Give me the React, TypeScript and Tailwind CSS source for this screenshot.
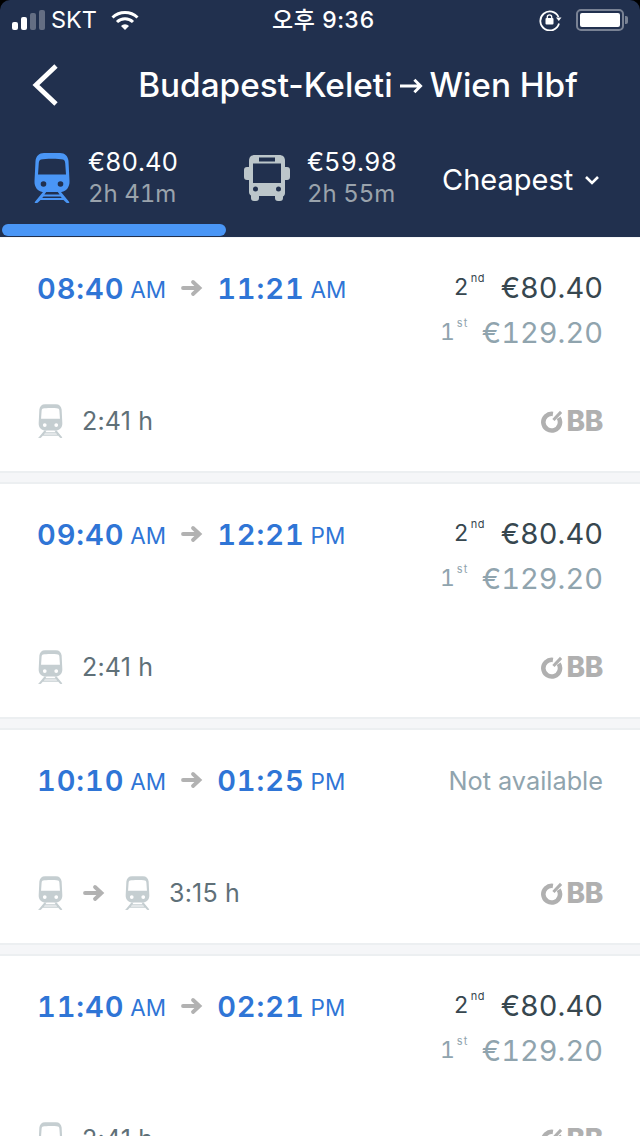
import React from 'react';

const font = { fontFamily: 'Inter, "Noto Sans CJK KR", sans-serif' };

function TrainIcon({ className }: { className?: string }) {
  return (
    <svg viewBox="0 0 40 50" className={className} fill="currentColor">
      <path
        fillRule="evenodd"
        d="M12 0h16c5 0 8 3 8.500 8l1 20c.3 6-3 10-8 11H10.500c-5-1-8.300-5-8-11l1-20C4 3 7 0 12 0zM9 6.500C7.500 7 7 8 6.800 10L6 21.500h28L33.200 10c-.2-2-.7-3-2.200-3.500C27 5.500 13 5.500 9 6.500z"
      />
      <circle cx="11.500" cy="31" r="2.800" fill="var(--hole)" />
      <circle cx="28.500" cy="31" r="2.800" fill="var(--hole)" />
      <path d="M11 39h3.200l-1.800 2.600h15.200L25.800 39H29l8 9.700c.6.800.3 1.300-.7 1.300h-1.200c-.6 0-1-.2-1.300-.7L31.500 47h-23l-2.300 2.300c-.3.500-.7.700-1.300.7H3.700c-1 0-1.300-.5-.7-1.300L11 39zM11.500 43.500l-1.300 1.500h19.600l-1.300-1.500z" />
    </svg>
  );
}

function BusIcon({ className }: { className?: string }) {
  return (
    <svg viewBox="0 0 46 46" className={className} fill="currentColor">
      <path
        fillRule="evenodd"
        d="M11 0h24c4 0 6 2 6 6v6h2c2 0 3 1 3 3v7c0 2-1 3-3 3h-2v13c0 2-1 3-2 3.500V43c0 2-1 3-3 3h-2c-2 0-3-1-3-3v-2H15v2c0 2-1 3-3 3h-2c-2 0-3-1-3-3v-2.500C6 40 5 39 5 37V25H3c-2 0-3-1-3-3v-7c0-2 1-3 3-3h2V6c0-4 2-6 6-6zM15 2.500v4h16v-4zM9 8.500V28h28V8.500zM11.500 31.500a2.500 2.500 0 1 0 0 5 2.500 2.500 0 0 0 0-5zm23 0a2.500 2.500 0 1 0 0 5 2.500 2.500 0 0 0 0-5z"
      />
    </svg>
  );
}

function SmallArrow() {
  return (
    <svg viewBox="0 0 22 18" className="h-[18px] w-[22px] text-[#b2b2b2]" fill="none" stroke="currentColor" strokeWidth="3.800" strokeLinecap="round">
      <path d="M2 9h16M12 3l6.500 6-6.500 6" />
    </svg>
  );
}

function ObbLogo() {
  return (
    <div className="flex items-center text-[#b0b0b0]">
      <svg viewBox="0 0 24 24" className="h-[23px] w-[23px]" fill="none" stroke="currentColor">
        <path strokeWidth="4.800" d="M13.500 4.100A8.700 8.700 0 1 0 19.500 8" />
        <path strokeWidth="3.200" d="M14 10.500L22 2" />
      </svg>
      <span className="ml-[3px] text-[28px] leading-none font-extrabold tracking-[-0.3px]">BB</span>
    </div>
  );
}

type Trip = {
  dep: string;
  depM: string;
  arr: string;
  arrM: string;
  duration: string;
  available: boolean;
  transfer?: boolean;
};

const trips: Trip[] = [
  { dep: '08:40', depM: 'AM', arr: '11:21', arrM: 'AM', duration: '2:41 h', available: true },
  { dep: '09:40', depM: 'AM', arr: '12:21', arrM: 'PM', duration: '2:41 h', available: true },
  { dep: '10:10', depM: 'AM', arr: '01:25', arrM: 'PM', duration: '3:15 h', available: false, transfer: true },
  { dep: '11:40', depM: 'AM', arr: '02:21', arrM: 'PM', duration: '2:41 h', available: true },
];

function TripCard({ trip }: { trip: Trip }) {
  return (
    <div className={`flex shrink-0 flex-col bg-white px-[37px] pt-[30px] ${trip.available ? 'h-[233px]' : 'h-[213px]'}`}>
      <div className="flex items-start justify-between">
        <div className="flex h-[40px] items-center text-[#2f75d6] tabular-nums">
          <span className="text-[29px] leading-none font-semibold tracking-[0.9px]">{trip.dep}</span>
          <span className="ml-[6px] mt-[4px] text-[22.500px] leading-none">{trip.depM}</span>
          <span className="mr-[14px] ml-[15px]"><SmallArrow /></span>
          <span className="text-[29px] leading-none font-semibold tracking-[0.9px]">{trip.arr}</span>
          <span className="ml-[6px] mt-[4px] text-[22.500px] leading-none">{trip.arrM}</span>
        </div>
        {trip.available ? (
          <div className="flex flex-col items-end tabular-nums">
            <div className="-mt-px flex h-[40px] items-center text-[#37474f]">
              <span className="relative mr-[18px] text-[23px]">
                2<sup className="absolute top-[3px] left-full ml-[2px] text-[11px] leading-none tracking-[0.5px]">nd</sup>
              </span>
              <span className="ml-[14px] text-[29px] leading-none">€80.40</span>
            </div>
            <div className="mt-[5px] flex h-[40px] items-center text-[#90a4ae]">
              <span className="relative mr-[18px] text-[23px]">
                1<sup className="absolute top-[3px] left-full ml-[2px] text-[11px] leading-none tracking-[1px]">st</sup>
              </span>
              <span className="ml-[9px] text-[29px] leading-none">€129.20</span>
            </div>
          </div>
        ) : (
          <div className="flex h-[42px] items-center text-[25.300px] leading-none text-[#90a4ae]">Not available</div>
        )}
      </div>
      <div className="mt-auto mb-[33px] flex items-center justify-between">
        <div className="flex items-center text-[#5f7078]">
          <TrainIcon className="h-[34px] w-[27px] text-[#c5ced1] [--hole:white]" />
          {trip.transfer && (
            <>
              <span className="mx-[19px]"><SmallArrow /></span>
              <TrainIcon className="h-[34px] w-[27px] text-[#c5ced1] [--hole:white]" />
            </>
          )}
          <span className="ml-[18px] text-[25px] leading-none tracking-[0.2px]">{trip.duration}</span>
        </div>
        <ObbLogo />
      </div>
    </div>
  );
}

export default function App() {
  return (
    <div style={font} className="flex h-[1136px] w-[640px] flex-col overflow-hidden bg-black">
      <div className="flex h-[237px] shrink-0 flex-col rounded-t-[10px] bg-[#21304e] text-white">
        <div className="flex h-[40px] items-center justify-between px-[12px]">
          <div className="flex items-center">
            <div className="flex items-end gap-[3px]">
              <span className="h-[8px] w-[6px] rounded-[2px] bg-white" />
              <span className="h-[13px] w-[6px] rounded-[2px] bg-white" />
              <span className="h-[17px] w-[6px] rounded-[2px] bg-white/30" />
              <span className="h-[20px] w-[6px] rounded-[2px] bg-white/30" />
            </div>
            <span className="ml-[6px] text-[23.500px] leading-none">SKT</span>
            <svg viewBox="0 0 28 20" className="ml-[14px] h-[20px] w-[28px]" fill="none" stroke="white" strokeWidth="3">
              <path d="M1.500 7.500a18 18 0 0 1 25 0M6 12a11.500 11.500 0 0 1 16 0" />
              <path d="M10 16a5.500 5.500 0 0 1 8 0l-4 4z" fill="white" stroke="none" />
            </svg>
          </div>
          <span className="ml-[-31px] text-[23px] leading-none font-medium tracking-[0.5px] tabular-nums">
            오후 9:36
          </span>
          <div className="flex items-center">
            <svg viewBox="0 0 24 22" className="h-[22px] w-[24px]" fill="none" stroke="white" strokeWidth="1.800">
              <path d="M20 14.500A9.500 9.500 0 1 1 19.500 8" />
              <path d="M17 8.500h5.500l-2.700 3.500z" fill="white" stroke="none" />
              <rect x="6.500" y="9" width="8" height="6.500" rx="1" fill="white" stroke="none" />
              <path d="M8.300 9.500V8a2.200 2.200 0 0 1 4.400 0v1.500" strokeWidth="1.300" />
            </svg>
            <div className="ml-[13px] flex h-[22px] w-[48px] items-center rounded-[5px] border-2 border-white/40 p-[2px]">
              <div className="h-full w-full rounded-[2px] bg-white" />
            </div>
            <div className="ml-[1px] h-[8px] w-[3px] rounded-r-[2px] bg-white/40" />
          </div>
        </div>

        <div className="relative mt-[22px] flex h-[48px] items-center justify-center">
          <svg viewBox="0 0 28 44" className="absolute top-[2px] left-[32px] h-[42px] w-[27px]" fill="none" stroke="white" strokeWidth="5">
            <path d="M25 2L4 22l21 20" />
          </svg>
          <div className="ml-[76px] flex items-center text-[33.300px] leading-none font-medium">
            <span>Budapest-Keleti</span>
            <svg viewBox="0 0 24 18" className="mx-[7px] h-[18px] w-[23px]" fill="none" stroke="white" strokeWidth="3">
              <path d="M0 9h21M15 2.500L21.500 9 15 15.500" />
            </svg>
            <span>Wien Hbf</span>
          </div>
        </div>

        <div className="mt-[22px] flex h-[105px] items-start">
          <div className="flex h-full w-[226px] shrink-0 flex-col">
            <div className="flex items-center pt-[15px] pl-[32px]">
              <TrainIcon className="h-[50px] w-[40px] text-[#4a96f6] [--hole:#21304e]" />
              <div className="ml-[16px] tabular-nums">
                <div className="text-[25.500px] leading-[30px]">€80.40</div>
                <div className="mt-[2px] text-[24px] leading-[30px] text-[#9aa3ac]">2h 41m</div>
              </div>
            </div>
            <div className="mt-auto mb-[1px] ml-[2px] h-[12px] rounded-[6px] bg-[#4a96f6]" />
          </div>
          <div className="ml-[18px] flex items-center pt-[15px]">
            <BusIcon className="h-[46px] w-[46px] text-[#bcc6ca]" />
            <div className="ml-[17px] tabular-nums">
              <div className="text-[25.500px] leading-[30px]">€59.98</div>
              <div className="mt-[2px] text-[24px] leading-[30px] text-[#9aa3ac]">2h 55m</div>
            </div>
          </div>
          <div className="ml-[45px] mt-[26px] flex h-[40px] items-center pt-[3px]">
            <span className="text-[29px] leading-none">Cheapest</span>
            <svg viewBox="0 0 14 10" className="ml-[12px] h-[10px] w-[14px]" fill="none" stroke="white" strokeWidth="2.600">
              <path d="M1 2l6 6 6-6" />
            </svg>
          </div>
        </div>
      </div>

      <div className="flex flex-col bg-[#f5f6f8] pt-px">
        {trips.map((t, i) => (
          <div key={i} className="flex shrink-0 flex-col">
            <TripCard trip={t} />
            <div className="h-[13px] border-y-2 border-[#eceff1] bg-[#f5f6f8]" />
          </div>
        ))}
      </div>
    </div>
  );
}
